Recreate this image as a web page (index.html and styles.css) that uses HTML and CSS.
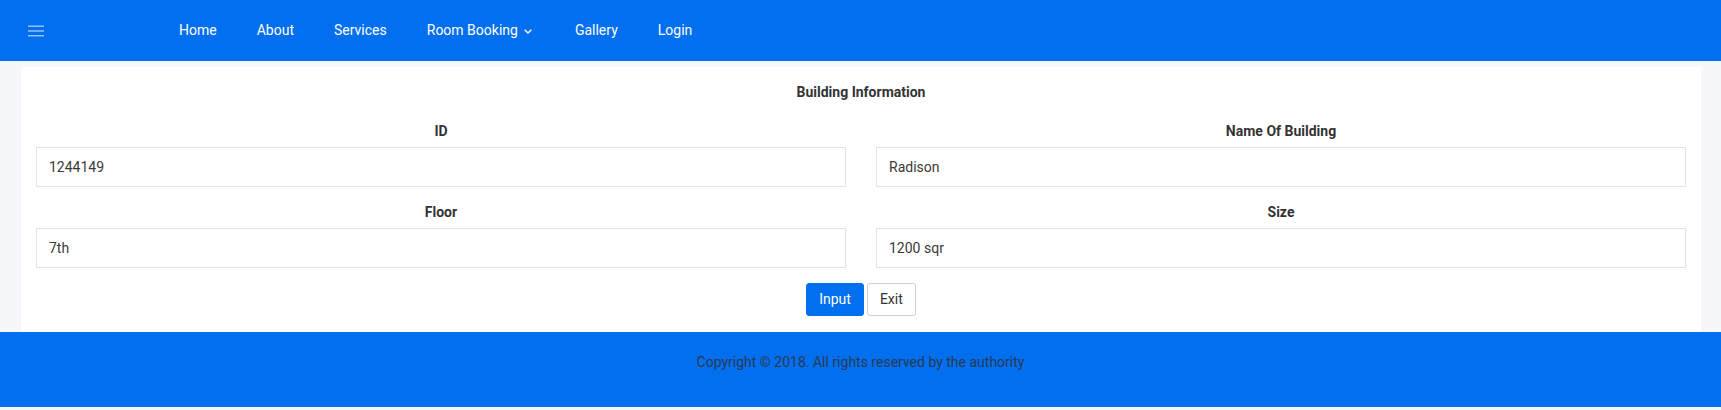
FILE: index.html
```html
<!DOCTYPE html>
<html lang="en">
<head>
<meta charset="utf-8">
<title>Building Information</title>
<link rel="stylesheet" href="styles.css">
</head>
<body>
<header class="topbar">
  <button class="menu-toggle" type="button" aria-label="Menu">
    <svg width="16" height="12" viewBox="0 0 16 12">
      <rect x="0" y="0.5" width="16" height="1.4" fill="currentColor"/>
      <rect x="0" y="5.3" width="16" height="1.4" fill="currentColor"/>
      <rect x="0" y="10" width="16" height="1.4" fill="currentColor"/>
    </svg>
  </button>
  <nav class="nav">
    <a class="nav-link" href="#">Home</a>
    <a class="nav-link" href="#">About</a>
    <a class="nav-link" href="#">Services</a>
    <a class="nav-link dropdown" href="#">Room Booking
      <svg class="chevron" width="8" height="5" viewBox="0 0 8 5"><path d="M0.7 0.7 L4 4 L7.3 0.7" fill="none" stroke="currentColor" stroke-width="1.3"/></svg>
    </a>
    <a class="nav-link" href="#">Gallery</a>
    <a class="nav-link" href="#">Login</a>
  </nav>
</header>

<main class="page">
  <section class="card">
    <h5 class="card-title">Building Information</h5>
    <form class="form-grid">
      <div class="field">
        <label class="field-label">ID</label>
        <input class="form-control" type="text" value="1244149">
      </div>
      <div class="field">
        <label class="field-label">Name Of Building</label>
        <input class="form-control" type="text" value="Radison">
      </div>
      <div class="field">
        <label class="field-label">Floor</label>
        <input class="form-control" type="text" value="7th">
      </div>
      <div class="field">
        <label class="field-label">Size</label>
        <input class="form-control" type="text" value="1200 sqr">
      </div>
    </form>
    <div class="actions">
      <button class="btn btn-primary" type="button">Input</button>
      <button class="btn btn-light" type="button">Exit</button>
    </div>
  </section>
</main>

<footer class="footer">
  <p class="footer-text">Copyright © 2018. All rights reserved by the authority</p>
</footer>
</body>
</html>
```

FILE: styles.css
```css
* { box-sizing: border-box; }

html, body {
  margin: 0;
  padding: 0;
}

body {
  background: #f5f7fa;
  font-family: Roboto, "Liberation Sans", Arial, sans-serif;
  font-size: 14px;
  line-height: 21px;
  color: #333;
}

.topbar {
  display: flex;
  align-items: center;
  height: 61px;
  background: #016fee;
  padding-left: 28px;
}

.menu-toggle {
  display: flex;
  align-items: center;
  padding: 0;
  margin: 0;
  border: 0;
  background: transparent;
  color: rgba(255, 255, 255, 0.62);
  width: 16px;
  height: 12px;
}

.nav {
  display: flex;
  align-items: center;
  margin-left: 115px;
}

.nav-link {
  display: flex;
  align-items: center;
  padding: 0 20px;
  color: #fff;
  text-decoration: none;
  font-size: 14px;
  line-height: 21px;
}

.nav-link.dropdown {
  padding-right: 23px;
}

.chevron {
  margin-left: 6px;
  margin-top: 1px;
}

.page {
  padding: 6px 20px 0 21px;
}

.card {
  background: #fff;
  padding: 15px 15px 16px;
}

.card-title {
  margin: 0 0 18px;
  text-align: center;
  font-size: 14px;
  line-height: 21px;
  font-weight: 700;
  color: #333;
}

.form-grid {
  display: grid;
  grid-template-columns: 1fr 1fr;
  column-gap: 30px;
  row-gap: 15px;
  margin: 0;
}

.field {
  display: flex;
  flex-direction: column;
}

.field-label {
  display: block;
  text-align: center;
  font-weight: 700;
  font-size: 14px;
  line-height: 21px;
  color: #333;
  margin-bottom: 5px;
}

.form-control {
  display: block;
  width: 100%;
  height: 40px;
  padding: 0 12px;
  border: 1px solid #e3e3e3;
  border-radius: 0;
  background: #fff;
  font-family: Roboto, "Liberation Sans", Arial, sans-serif;
  font-size: 14px;
  color: #3a3a3a;
  outline: none;
}

.actions {
  display: flex;
  justify-content: center;
  gap: 3px;
  margin-top: 15px;
}

.btn {
  font-family: Roboto, "Liberation Sans", Arial, sans-serif;
  font-size: 14px;
  line-height: 21px;
  padding: 5px 12px;
  border-radius: 3px;
  border: 1px solid transparent;
  cursor: pointer;
}

.btn-primary {
  background: #016fee;
  border-color: #016fee;
  color: #fff;
}

.btn-light {
  background: #fff;
  border-color: #cfcfcf;
  color: #333;
}

.footer {
  background: #016fee;
  padding: 20px 0 34px;
}

.footer-text {
  margin: 0;
  text-align: center;
  font-size: 14px;
  line-height: 21px;
  color: #2a3a55;
}
```
